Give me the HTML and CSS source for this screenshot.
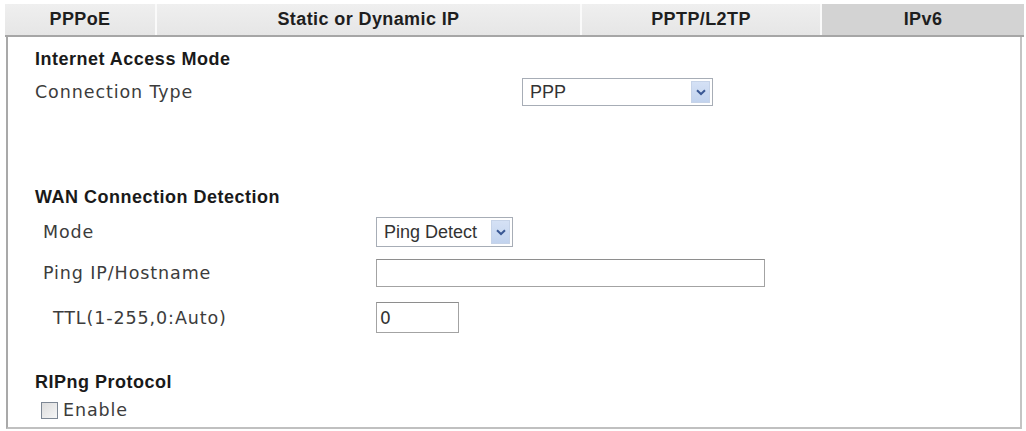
FILE: index.html
```html
<!DOCTYPE html>
<html>
<head>
<meta charset="utf-8">
<link rel="stylesheet" href="styles.css">
</head>
<body>
<div class="page">
  <div class="tabs">
    <div class="tab tab-pppoe">PPPoE</div>
    <div class="tab tab-static">Static or Dynamic IP</div>
    <div class="tab tab-pptp">PPTP/L2TP</div>
    <div class="tab tab-ipv6 active">IPv6</div>
  </div>
  <div class="panel">
    <div class="heading h-access">Internet Access Mode</div>
    <div class="row row-conn">
      <div class="label">Connection Type</div>
      <div class="select sel-ppp">
        <span class="sel-text">PPP</span>
        <span class="sel-arrow"><svg width="10" height="7" viewBox="0 0 10 7"><path d="M1 1.2 L5 5 L9 1.2" fill="none" stroke="#3a5894" stroke-width="2"/></svg></span>
      </div>
    </div>

    <div class="heading h-wan">WAN Connection Detection</div>
    <div class="sub sub-mode">
      <div class="label">Mode</div>
      <div class="select sel-ping">
        <span class="sel-text">Ping Detect</span>
        <span class="sel-arrow"><svg width="10" height="7" viewBox="0 0 10 7"><path d="M1 1.2 L5 5 L9 1.2" fill="none" stroke="#3a5894" stroke-width="2"/></svg></span>
      </div>
    </div>
    <div class="sub sub-host">
      <div class="label">Ping IP/Hostname</div>
      <div class="input in-host"></div>
    </div>
    <div class="sub sub-ttl">
      <div class="label label-ttl">TTL(1-255,0:Auto)</div>
      <div class="input in-ttl">0</div>
    </div>

    <div class="heading h-rip">RIPng Protocol</div>
    <div class="check-row">
      <span class="checkbox"></span>
      <span class="check-label">Enable</span>
    </div>
  </div>
</div>
</body>
</html>
```

FILE: styles.css
```css
* { box-sizing: border-box; }

body {
  margin: 0;
  background: #ffffff;
  font-family: "DejaVu Sans", Verdana, sans-serif;
  color: #3a3a3a;
}

.page {
  padding: 4px 2px 0 5px;
}

.tabs {
  display: flex;
  height: 33px;
  background: #ebebeb;
  border-bottom: 2px solid #a6a6a6;
}

.tab {
  display: flex;
  align-items: center;
  justify-content: center;
  font-family: "Liberation Sans", Arial, sans-serif;
  font-weight: bold;
  font-size: 18px;
  letter-spacing: 0.4px;
  color: #1e1e1e;
  border-right: 2px solid #fafafa;
  background: linear-gradient(#efefef, #e6e6e6);
}

.tab-pppoe { width: 152px; }
.tab-static { width: 425px; }
.tab-pptp { width: 240px; }
.tab-ipv6 { flex: 1; border-right: none; }
.tab.active { background: #d3d3d3; }

.panel {
  margin: 0 2px 0 1px;
  height: 392px;
  border-left: 2px solid #a9a9a9;
  border-right: 2px solid #c4c4c4;
  border-bottom: 2px solid #c0c0c0;
  padding: 8px 0 0 27px;
}

.heading {
  height: 28px;
  line-height: 28px;
  font-family: "Liberation Sans", Arial, sans-serif;
  font-weight: bold;
  font-size: 18px;
  letter-spacing: 0.5px;
  color: #1a1a1a;
}

.h-wan { margin-top: 77px; }
.h-rip { margin-top: 35px; }

.label {
  font-size: 17.5px;
  letter-spacing: 0.9px;
  color: #3c3c3c;
}

.row {
  display: grid;
  grid-template-columns: 487px auto;
  align-items: center;
  margin-top: 5px;
  height: 28px;
}

.sub {
  display: grid;
  grid-template-columns: 333px auto;
  align-items: center;
  padding-left: 8px;
}

.sub-mode { margin-top: 6px; height: 30px; }
.sub-host { margin-top: 12px; height: 28px; }
.sub-ttl { margin-top: 15px; height: 31px; }

.label-ttl { padding-left: 10px; }

.select {
  display: flex;
  align-items: stretch;
  height: 100%;
  border: 1px solid #a7adb6;
  background: #ffffff;
  padding: 2px;
}

.sel-ppp { width: 191px; height: 28px; }
.sel-ping { width: 137px; height: 30px; }

.sel-text {
  flex: 1;
  display: flex;
  align-items: center;
  padding-left: 5px;
  font-family: "Liberation Sans", Arial, sans-serif;
  font-size: 18px;
  color: #333333;
}

.sel-arrow {
  width: 19px;
  display: flex;
  align-items: center;
  justify-content: center;
  background: linear-gradient(#d5e1f5, #c2d3ee);
  border: 1px solid #c6d3e8;
}

.input {
  border: 1px solid #a3a3a3;
  border-top-color: #8e8e8e;
  background: #ffffff;
  height: 100%;
}

.in-host { width: 389px; }

.in-ttl {
  width: 83px;
  display: flex;
  align-items: center;
  padding-left: 3px;
  font-size: 17px;
  color: #333333;
}

.check-row {
  display: flex;
  align-items: center;
  height: 28px;
  padding-left: 6px;
}

.checkbox {
  width: 17px;
  height: 17px;
  border: 1px solid #7d8794;
  background: linear-gradient(135deg, #dcdcdc, #f6f6f6);
  margin-right: 5px;
}

.check-label {
  font-size: 17.5px;
  letter-spacing: 0.9px;
  color: #3c3c3c;
}
```
